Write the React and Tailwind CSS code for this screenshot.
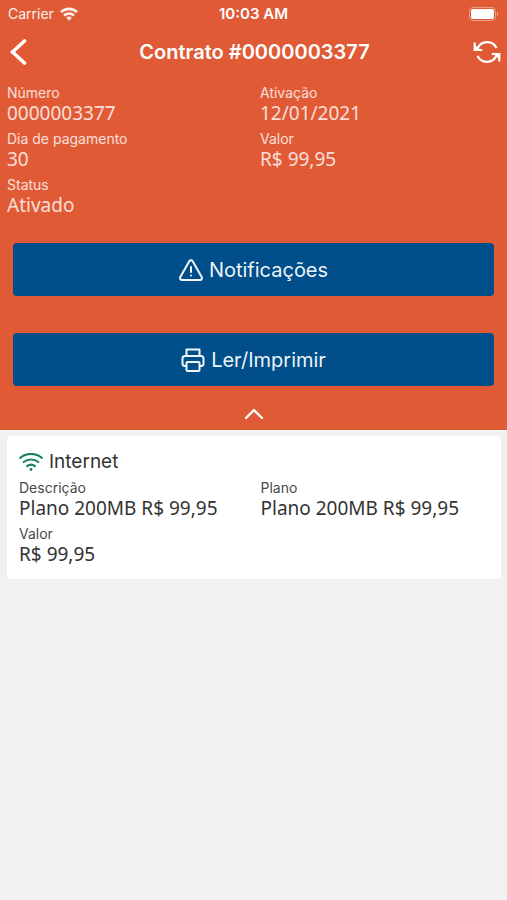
import React from "react";

const contractFields = [
  { label: "Número", value: "0000003377" },
  { label: "Ativação", value: "12/01/2021" },
  { label: "Dia de pagamento", value: "30" },
  { label: "Valor", value: "R$ 99,95" },
  { label: "Status", value: "Ativado" },
];

const planFields = [
  { label: "Descrição", value: "Plano 200MB R$ 99,95" },
  { label: "Plano", value: "Plano 200MB R$ 99,95" },
  { label: "Valor", value: "R$ 99,95" },
];

function Field({ label, value, labelClass }) {
  return (
    <div>
      <dt className={`text-sm leading-[18px] ${labelClass}`}>{label}</dt>
      <dd className="font-['Noto_Sans',sans-serif] text-[19px] leading-[22px]">{value}</dd>
    </div>
  );
}

function StatusWifi() {
  return (
    <svg viewBox="0 0 18 14" className="h-[14px] w-[18px]" fill="none" stroke="currentColor" strokeWidth="2.6" aria-hidden="true">
      <path d="M1 5.200a11.300 11.300 0 0 1 16 0" />
      <path d="M4 8.600a7 7 0 0 1 10 0" />
      <path d="M6.200 10.800a4 4 0 0 1 5.600 0L9 13.800z" fill="currentColor" stroke="none" />
    </svg>
  );
}

function Battery() {
  return (
    <svg viewBox="0 0 30 14" className="h-[14px] w-[30px]" aria-hidden="true">
      <rect x="0.5" y="0.5" width="26" height="13" rx="3.5" fill="none" stroke="#fff" strokeOpacity="0.4" />
      <rect x="2" y="2" width="23" height="10" rx="2" fill="#fff" />
      <path d="M28 5v4c1.600-.5 1.600-3.500 0-4z" fill="#fff" fillOpacity="0.5" />
    </svg>
  );
}

function RefreshIcon() {
  return (
    <svg viewBox="0 0 28 24" className="h-6 w-7" fill="none" stroke="currentColor" strokeWidth="2.2" aria-hidden="true">
      <path d="M4.500 8.500A10.500 10.500 0 0 1 23.500 8" />
      <path d="M1.700 2.500v7.500h7.500" />
      <path d="M1 4v6.500h7z" fill="currentColor" stroke="none" />
      <path d="M23.500 15.500A10.500 10.500 0 0 1 4.500 16" />
      <path d="M26.300 21.500v-7.500h-7.500" />
      <path d="M27 20v-6.500h-7z" fill="currentColor" stroke="none" />
    </svg>
  );
}

function WarningIcon() {
  return (
    <svg viewBox="0 0 24 22" className="h-[22px] w-6" fill="none" stroke="currentColor" strokeWidth="2" strokeLinecap="round" strokeLinejoin="round" aria-hidden="true">
      <path d="M10.300 2.200 1.300 18a2 2 0 0 0 1.700 3h18a2 2 0 0 0 1.700-3l-9-15.800a2 2 0 0 0-3.400 0z" />
      <path d="M12 8v5M12 16.500v.1" />
    </svg>
  );
}

function PrinterIcon() {
  return (
    <svg viewBox="0 0 24 24" className="h-6 w-6" fill="none" stroke="currentColor" strokeWidth="2" strokeLinejoin="round" aria-hidden="true">
      <path d="M5.500 8V1.500h13V8" />
      <path d="M5.500 18H4a2.500 2.500 0 0 1-2.500-2.500v-5A2.500 2.500 0 0 1 4 8h16a2.500 2.500 0 0 1 2.500 2.500v5A2.500 2.500 0 0 1 20 18h-1.500" />
      <rect x="5.500" y="14" width="13" height="9" rx="1" />
    </svg>
  );
}

function InternetIcon() {
  return (
    <svg viewBox="0 0 24 18" className="h-[18px] w-6" fill="none" stroke="currentColor" strokeWidth="2.200" strokeLinecap="round" aria-hidden="true">
      <path d="M1.200 4.800a17 17 0 0 1 21.600 0" />
      <path d="M4.700 9a12 12 0 0 1 14.600 0" />
      <path d="M8.200 13a6.500 6.500 0 0 1 7.600 0" />
      <circle cx="12" cy="16.500" r="1.400" fill="currentColor" stroke="none" />
    </svg>
  );
}

export default function App() {
  return (
    <div className="min-h-screen bg-[#f1f1f1] font-['Inter',sans-serif]">
      <header className="border-b-2 border-[#faf6f4] bg-[#e05a35] text-white">
        <div className="grid h-7 grid-cols-3 items-center px-2 text-sm">
          <div className="flex items-center gap-1.5 text-white/90">
            <span>Carrier</span>
            <StatusWifi />
          </div>
          <span className="text-center text-[15px] font-semibold">10:03 AM</span>
          <div className="flex justify-end">
            <Battery />
          </div>
        </div>

        <div className="flex h-12 items-center justify-between pl-2 pr-1.5">
          <button type="button" aria-label="Voltar" className="flex w-7 items-center">
            <svg viewBox="0 0 20 28" className="h-7 w-5" fill="none" stroke="currentColor" strokeWidth="3.600" strokeLinecap="round" aria-hidden="true">
              <path d="M16.500 3 4.500 14l12 11" />
            </svg>
          </button>
          <h1 className="text-xl font-semibold">Contrato #0000003377</h1>
          <button type="button" aria-label="Atualizar">
            <RefreshIcon />
          </button>
        </div>

        <dl className="grid grid-cols-2 gap-x-[13px] gap-y-1.5 px-[7px] pt-2 text-white/80">
          {contractFields.map((f) => (
            <Field key={f.label} {...f} labelClass="" />
          ))}
        </dl>

        <div className="flex flex-col gap-[37px] px-[13px] pt-[27px]">
          <button type="button" className="flex h-[53px] items-center justify-center gap-1.5 rounded bg-[#004f8a] text-xl text-white/95">
            <WarningIcon />
            Notificações
          </button>
          <button type="button" className="flex h-[53px] items-center justify-center gap-1.5 rounded bg-[#004f8a] text-xl text-white/95">
            <PrinterIcon />
            Ler/Imprimir
          </button>
        </div>

        <button type="button" aria-label="Recolher detalhes" className="flex h-11 w-full items-center justify-center pt-3">
          <svg viewBox="0 0 20 12" className="h-3 w-5" fill="none" stroke="currentColor" strokeWidth="2.400" strokeLinecap="round" strokeLinejoin="round" aria-hidden="true">
            <path d="m2 10 8-8 8 8" />
          </svg>
        </button>
      </header>

      <main className="pl-[7px] pr-1.5 pt-1">
        <section className="rounded-sm bg-white px-3 pb-3.5 pt-3 text-[#333333]">
          <h2 className="flex items-center gap-1.5 text-[19px] leading-7">
            <span className="text-[#168264]">
              <InternetIcon />
            </span>
            Internet
          </h2>
          <dl className="grid grid-cols-2 gap-x-[13px] gap-y-1.5 pt-[3px]">
            {planFields.map((f) => (
              <Field key={f.label} {...f} labelClass="text-[#4a4a4a]" />
            ))}
          </dl>
        </section>
      </main>
    </div>
  );
}
